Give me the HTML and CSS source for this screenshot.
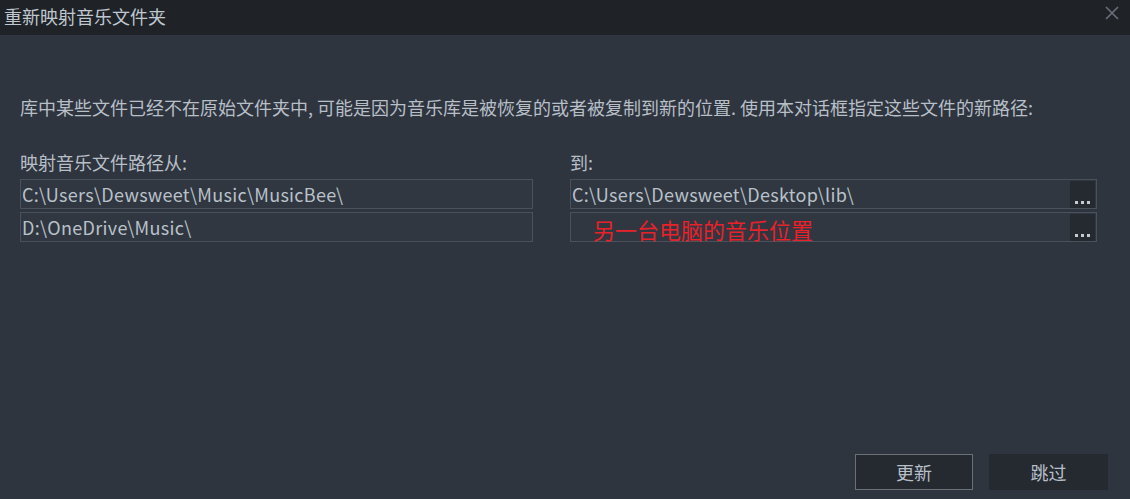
FILE: index.html
```html
<!DOCTYPE html>
<html lang="zh-CN">
<head>
<meta charset="utf-8">
<title>重新映射音乐文件夹</title>
<link rel="stylesheet" href="styles.css">
</head>
<body>
<div class="window">
  <div class="titlebar">
    <span class="title">重新映射音乐文件夹</span>
    <svg class="close" width="14" height="14" viewBox="0 0 14 14"><path d="M1 1L13 13M13 1L1 13" stroke="#6a7079" stroke-width="1.6" fill="none"/></svg>
  </div>
  <div class="content">
    <p class="desc">库中某些文件已经不在原始文件夹中, 可能是因为音乐库是被恢复的或者被复制到新的位置. 使用本对话框指定这些文件的新路径:</p>
    <div class="columns">
      <div class="col">
        <div class="label">映射音乐文件路径从:</div>
        <div class="field"><span class="val">C:\Users\Dewsweet\Music\MusicBee\</span></div>
        <div class="field"><span class="val">D:\OneDrive\Music\</span></div>
      </div>
      <div class="col">
        <div class="label">到:</div>
        <div class="field"><span class="val">C:\Users\Dewsweet\Desktop\lib\</span><span class="browse"><i></i><i></i><i></i></span></div>
        <div class="field"><span class="val note">另一台电脑的音乐位置</span><span class="browse"><i></i><i></i><i></i></span></div>
      </div>
    </div>
    <div class="actions">
      <button class="btn btn-primary">更新</button>
      <button class="btn">跳过</button>
    </div>
  </div>
</div>
</body>
</html>
```
FILE: styles.css
```css
* { box-sizing: border-box; }
html, body { margin: 0; padding: 0; }
body {
  width: 1130px;
  height: 499px;
  overflow: hidden;
  background: #2f353e;
  font-family: "Noto Sans CJK SC", "Noto Sans", sans-serif;
  color: #b7bfc8;
}
.window {
  height: 499px;
  display: flex;
  flex-direction: column;
}
.titlebar {
  height: 35px;
  flex: none;
  background: #1f2328;
  display: flex;
  align-items: center;
  justify-content: space-between;
  padding: 0 11px 4px 4px;
}
.title {
  font-size: 18px;
  color: #bfc7cf;
  line-height: 24px;
}
.close { display: block; margin-top: -6px; }
.content {
  flex: 1;
  display: flex;
  flex-direction: column;
  padding: 0 0 9px 20px;
}
.desc {
  margin: 60px 0 0 0;
  font-size: 18px;
  line-height: 24px;
  white-space: nowrap;
}
.columns {
  display: grid;
  grid-template-columns: 513px 527px;
  column-gap: 37px;
  margin-top: 31px;
}
.col {
  display: flex;
  flex-direction: column;
  gap: 3px;
}
.label {
  font-size: 18px;
  line-height: 24px;
  margin-bottom: 2px;
}
.field {
  height: 30px;
  border: 1px solid #4b515a;
  background: #303740;
  display: flex;
  align-items: stretch;
  padding-left: 1px;
}
.val {
  flex: 1;
  font-size: 18px;
  line-height: 28px;
  white-space: nowrap;
  letter-spacing: 0.3px;
  color: #b9c1ca;
}
.note {
  color: #e8212b;
  font-size: 22px;
  line-height: 28px;
  letter-spacing: 0;
  padding-left: 21px;
  position: relative;
  top: 2px;
}
.browse {
  width: 25px;
  margin: 1px 1px 0 0;
  background: #252a31;
  display: flex;
  align-items: flex-end;
  justify-content: center;
  gap: 3px;
  padding-bottom: 4px;
}
.browse i {
  display: block;
  width: 3px;
  height: 3px;
  background: #c4cad2;
}
.actions {
  margin-top: auto;
  display: flex;
  justify-content: flex-end;
  gap: 16px;
  padding-right: 22px;
}
.btn {
  width: 119px;
  height: 36px;
  font-family: inherit;
  font-size: 18px;
  color: #b7bfc8;
  background: #252a31;
  border: 1px solid #252a31;
  padding: 0;
}
.btn-primary {
  width: 118px;
  border-color: #6b7077;
}
```
